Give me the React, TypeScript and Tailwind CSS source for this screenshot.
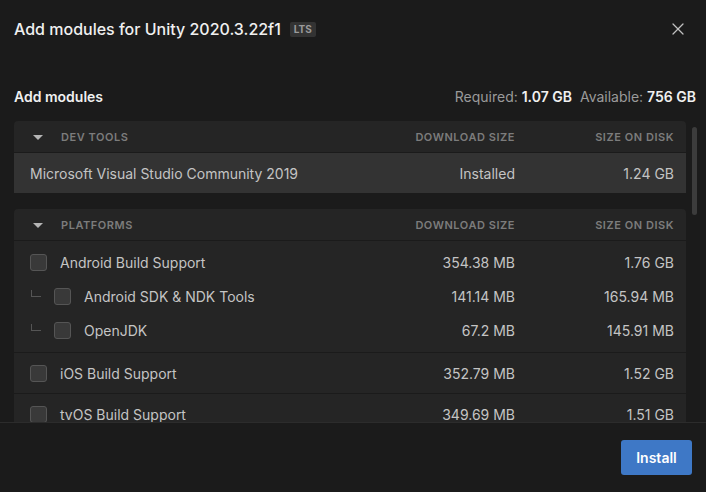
import { X } from "lucide-react";

type Row = { name: string; download: string; disk: string; child?: boolean };

const groups: Row[][] = [
  [
    { name: "Android Build Support", download: "354.38 MB", disk: "1.76 GB" },
    { name: "Android SDK & NDK Tools", download: "141.14 MB", disk: "165.94 MB", child: true },
    { name: "OpenJDK", download: "67.2 MB", disk: "145.91 MB", child: true },
  ],
  [{ name: "iOS Build Support", download: "352.79 MB", disk: "1.52 GB" }],
  [{ name: "tvOS Build Support", download: "349.69 MB", disk: "1.51 GB" }],
];

function Caret() {
  return (
    <svg width="10" height="6" viewBox="0 0 10 6" className="ml-[19px] mr-[18px]">
      <path d="M0 0 L10 0 L5 5 Z" fill="#b5b5b5" />
    </svg>
  );
}

function SectionHeader({ title }: { title: string }) {
  return (
    <div className="h-[32px] pt-[2px] flex items-center border-b border-[#1b1b1b] text-[11px] font-semibold tracking-[0.05em] text-[#7c7c7c]">
      <Caret />
      <span className="flex-1">{title}</span>
      <span className="w-[140px] text-right">DOWNLOAD SIZE</span>
      <span className="w-[171px] pr-[12px] text-right">SIZE ON DISK</span>
    </div>
  );
}

function Checkbox() {
  return <div className="w-[17px] h-[17px] rounded-[3px] bg-[#393939] border border-[#555]" />;
}

export default function App() {
  return (
    <div
      className="w-[706px] h-[492px] bg-[#1b1b1b] flex flex-col overflow-hidden text-[#c8c8c8]"
      style={{ fontFamily: "Inter, 'Noto Sans', sans-serif" }}
    >
      <div className="h-[58px] flex items-center justify-between pl-[14px] pr-[18px]">
        <div className="flex items-center gap-[9px]">
          <span className="text-[16px] font-medium text-[#f0f0f0]">Add modules for Unity 2020.3.22f1</span>
          <span className="h-[15px] px-[4px] rounded-[2px] bg-[#333] text-[10px] font-bold leading-[15px] text-[#9a9a9a]">
            LTS
          </span>
        </div>
        <X size={20} strokeWidth={1.5} className="text-[#c0c0c0]" />
      </div>

      <div className="mt-[26px] h-[24px] flex items-center justify-between pl-[14px] pr-[10px] text-[14px]">
        <span className="font-semibold text-[#f0f0f0]">Add modules</span>
        <span className="text-[#9a9a9a]">
          Required: <b className="font-semibold text-[#f0f0f0]">1.07 GB</b>
          <span className="ml-[8px]">Available: </span>
          <b className="font-semibold text-[#f0f0f0]">756 GB</b>
        </span>
      </div>

      <div className="mt-[13px] h-[301px] flex overflow-hidden">
        <div className="ml-[14px] w-[672px] flex flex-col gap-[16px]">
          <div className="rounded-t-[4px] bg-[#252525]">
            <SectionHeader title="DEV TOOLS" />
            <div className="h-[40px] flex items-center bg-[#333] text-[14px] text-[#c4c4c4]">
              <span className="flex-1 pl-[16px]">Microsoft Visual Studio Community 2019</span>
              <span className="w-[140px] text-right">Installed</span>
              <span className="w-[171px] pr-[12px] text-right">1.24 GB</span>
            </div>
          </div>

          <div className="rounded-t-[4px] bg-[#252525] flex-1">
            <SectionHeader title="PLATFORMS" />
            {groups.map((group, gi) => (
              <div
                key={gi}
                className={
                  gi === 0
                    ? "pt-[4px] pb-[5px] border-b border-[#1b1b1b]"
                    : "py-[3px] border-b border-[#1b1b1b]"
                }
              >
                {group.map((row) => (
                  <div key={row.name} className="h-[34px] flex items-center text-[14px] text-[#c4c4c4]">
                    <div className="flex-1 flex items-center">
                      {row.child ? (
                        <>
                          <div className="ml-[17px] mr-[13px] mb-[6px] w-[10px] h-[7px] border-l border-b border-[#555]" />
                          <Checkbox />
                        </>
                      ) : (
                        <div className="ml-[16px]">
                          <Checkbox />
                        </div>
                      )}
                      <span className="ml-[13px]">{row.name}</span>
                    </div>
                    <span className="w-[140px] text-right">{row.download}</span>
                    <span className="w-[171px] pr-[12px] text-right">{row.disk}</span>
                  </div>
                ))}
              </div>
            ))}
          </div>
        </div>
        <div className="ml-[6px] mt-[6px] w-[5px] h-[88px] rounded-full bg-[#3c3c3c]" />
      </div>

      <div className="flex-1 border-t border-[#2c2c2c] flex justify-end items-start pt-[17px] pr-[14px]">
        <button className="w-[71px] h-[35px] rounded-[3px] bg-[#3e78c6] text-[14px] font-semibold text-white">
          Install
        </button>
      </div>
    </div>
  );
}
